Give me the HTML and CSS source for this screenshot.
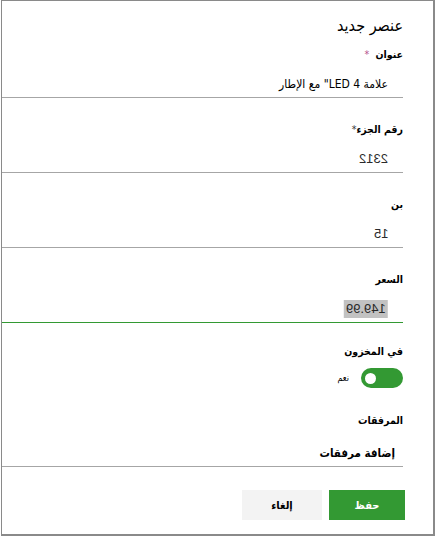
FILE: index.html
```html
<!DOCTYPE html>
<html lang="ar" dir="rtl">
<head>
<meta charset="utf-8">
<title>عنصر جديد</title>
<link rel="stylesheet" href="styles.css">
</head>
<body>
<div class="panel">
  <h1 class="title">عنصر جديد</h1>

  <div class="field field-first">
    <div class="label">عنوان <span class="req req-pink">*</span></div>
    <div class="value">علامة 4 LED" مع الإطار</div>
  </div>

  <div class="field">
    <div class="label">رقم الجزء<span class="req">*</span></div>
    <div class="value"><span class="mirror">2312</span></div>
  </div>

  <div class="field">
    <div class="label">بن</div>
    <div class="value"><span class="mirror">15</span></div>
  </div>

  <div class="field field-focus">
    <div class="label">السعر</div>
    <div class="value"><span class="mirror selected">149.99</span></div>
  </div>

  <div class="field field-toggle">
    <div class="label">في المخزون</div>
    <div class="toggle-row">
      <span class="toggle"><span class="knob"></span></span>
      <span class="toggle-text">نعم</span>
    </div>
  </div>

  <div class="field field-attach">
    <div class="label">المرفقات</div>
    <div class="value value-attach">إضافة مرفقات</div>
  </div>

  <div class="actions">
    <button class="btn btn-primary">حفظ</button>
    <button class="btn btn-default">إلغاء</button>
  </div>
</div>
</body>
</html>
```

FILE: styles.css
```css
* { box-sizing: border-box; }

html, body {
  margin: 0;
  padding: 0;
  background: #ffffff;
}

body {
  font-family: "DejaVu Sans Condensed", "DejaVu Sans", sans-serif;
  color: #000000;
}

.panel {
  width: 434px;
  height: 536px;
  border-style: solid;
  border-color: #8a8a8a;
  border-width: 1px 2px 2px 1px;
  padding: 0 30px 0 0;
  direction: rtl;
  overflow: hidden;
}

.title {
  margin: 0;
  padding-top: 13px;
  font-size: 16px;
  line-height: 24px;
  font-weight: normal;
}

.field {
  padding-top: 22px;
  padding-bottom: 1px;
  border-bottom: 1px solid #a6a6a6;
}

.field-first {
  padding-top: 7px;
}

.label {
  font-size: 10.5px;
  font-weight: bold;
  line-height: 18px;
}

.req {
  font-weight: normal;
  color: #333333;
}

.req-pink {
  color: #b4508c;
  margin-right: 3px;
}

.value {
  margin-top: 9px;
  padding-right: 15px;
  font-size: 12px;
  line-height: 24px;
}

.value-attach {
  padding-right: 8px;
  font-size: 11.5px;
  font-weight: bold;
}

.mirror {
  display: inline-block;
  transform: scaleX(-1);
  color: #2a2a2a;
  font-family: "Liberation Sans", sans-serif;
  font-size: 13px;
}

.selected {
  background: #c2c2c2;
  line-height: 18px;
  padding: 0 2px;
}

.field-focus {
  border-bottom-color: #339933;
}

.field-toggle {
  padding-top: 19px;
  border-bottom: none;
  padding-bottom: 0;
}

.toggle-row {
  margin-top: 8px;
  display: flex;
  align-items: center;
  gap: 12px;
  height: 20px;
}

.toggle {
  width: 42px;
  height: 20px;
  border-radius: 10px;
  background: #339933;
  display: flex;
  align-items: center;
  justify-content: flex-end;
  padding-left: 4px;
}

.knob {
  width: 11px;
  height: 11px;
  border-radius: 50%;
  background: #ffffff;
}

.toggle-text {
  font-size: 9px;
}

.field-attach {
  padding-top: 23px;
}

.field-attach .value {
  margin-top: 12px;
}

.actions {
  margin-top: 23px;
  margin-right: -2px;
  display: flex;
  gap: 7px;
}

.btn {
  height: 30px;
  border: none;
  font-family: inherit;
  font-size: 11px;
  font-weight: bold;
  padding: 0;
}

.btn-primary {
  width: 76px;
  background: #339933;
  color: #ffffff;
}

.btn-default {
  width: 80px;
  background: #f3f3f3;
  color: #000000;
}
```
